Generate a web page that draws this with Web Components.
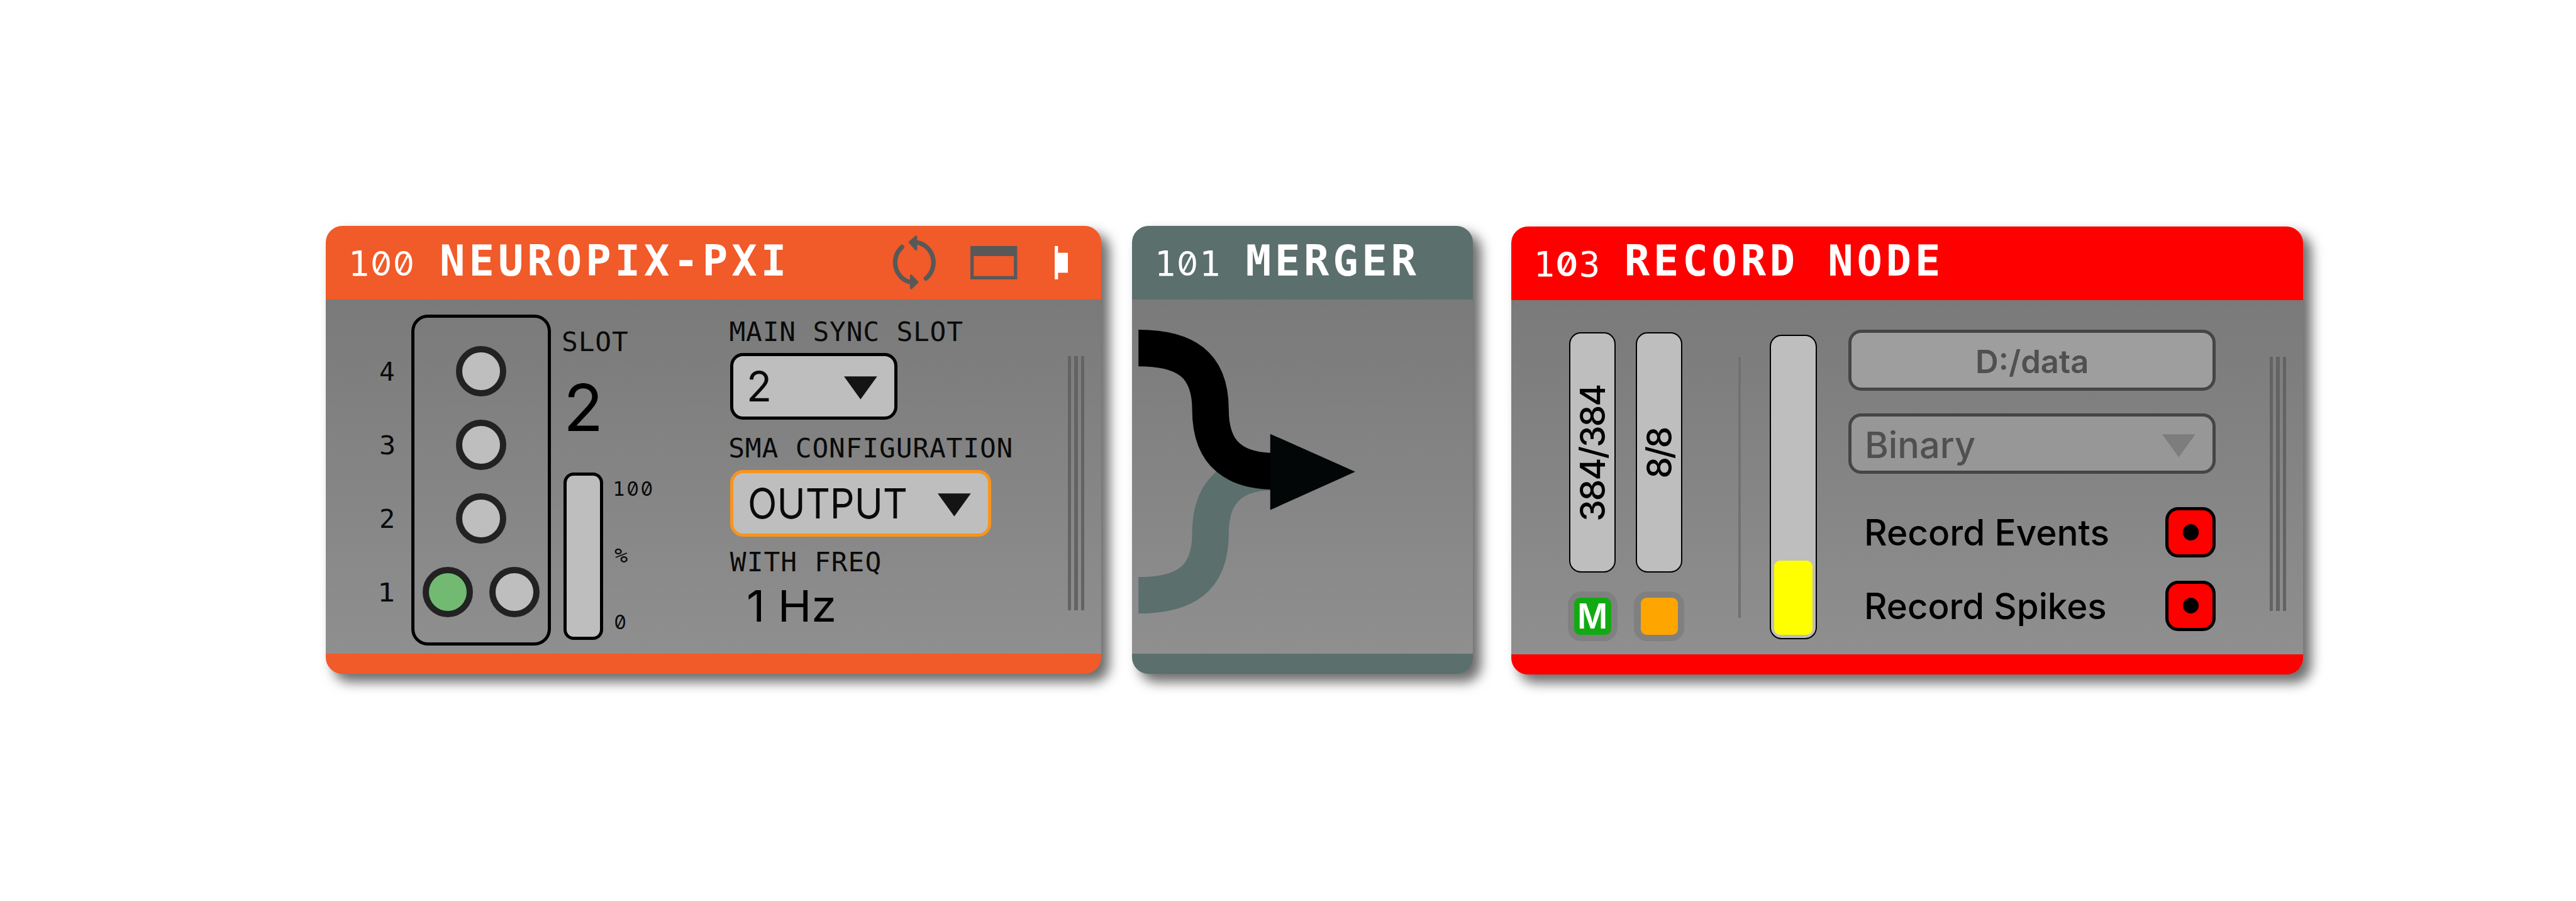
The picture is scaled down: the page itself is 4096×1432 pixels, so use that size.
<!DOCTYPE html>
<html lang="en">
<head>
<meta charset="utf-8">
<title>Signal chain</title>
<style>
  /* 1rem = ten design pixels */
  html { font-size: 8.5015px; background: #fff; }
  body { margin: 0; width: 100vw; height: 100vh; overflow: hidden; }
</style>
</head>
<body>
<signal-chain></signal-chain>
<script>
const MONO = '"DejaVu Sans Mono", monospace';
const SANS = 'Inter, "Liberation Sans", sans-serif';
const ctx = document.createElement('canvas').getContext('2d');
const measure = (weight, family, text) => {
  ctx.font = `${weight} 400px ${family}`;
  return ctx.measureText(text);
};

function define(name, html, setup) {
  customElements.define(name, class extends HTMLElement {
    connectedCallback() {
      if (this.shadowRoot) return;
      this.attachShadow({ mode: 'open' }).innerHTML = html;
      if (setup) setup(this, this.shadowRoot);
    }
  });
}

/* Text whose box is its cap height by its inked width (both in rem).
   The width is reached with letter spacing, or with condensed glyphs if [squeeze]. */
define('fit-label', `<style>
  :host { display: flow-root; flex: none; white-space: pre; }
  div { white-space: pre; transform-origin: 0 0; }
  .z { line-height: 0; font-family: Inter, sans-serif; font-feature-settings: "zero" 1; }
</style><div></div>`, (el, root) => {
  const rem = parseFloat(getComputedStyle(document.documentElement).fontSize);
  const mono = el.hasAttribute('mono');
  const squeeze = el.hasAttribute('squeeze');
  const family = mono ? MONO : SANS;
  const weight = el.getAttribute('weight') || 400;
  const cap = parseFloat(el.getAttribute('cap')) * rem;
  const width = parseFloat(el.getAttribute('w')) * rem;
  const text = el.textContent;
  el.textContent = '';
  const size = cap / (measure(weight, family, 'H').actualBoundingBoxAscent / 400);
  const k = size / 400;
  const m = measure(weight, family, text);
  const ink = (m.actualBoundingBoxLeft + m.actualBoundingBoxRight) * k;
  const ratio = squeeze ? width / ink : 1;
  const gap = text.length > 1 && !squeeze ? (width - ink) / (text.length - 1) : 0;
  const div = root.querySelector('div');
  el.style.width = width + 'px';
  el.style.height = cap + 'px';
  Object.assign(div.style, {
    fontFamily: family, fontWeight: weight, fontSize: size + 'px',
    lineHeight: cap + 'px', letterSpacing: gap + 'px',
    marginTop: (cap - (m.fontBoundingBoxAscent - m.fontBoundingBoxDescent) * k) / 2 + 'px',
    marginLeft: m.actualBoundingBoxLeft * k * ratio + (text.length > 1 || squeeze ? 0 : (width - ink) / 2) + 'px',
    transform: squeeze ? `scaleX(${ratio})` : ''
  });
  if (mono && text.includes('0')) {
    const zw = el.getAttribute('zero') || weight;
    const zs = cap / (measure(zw, 'Inter', 'H').actualBoundingBoxAscent / 400) * 0.96;
    const cell = measure(weight, family, '0').width * k + gap;
    const half = (cell - gap - measure(zw, 'Inter', '0').width * zs / 400) / 2;
    for (const c of text) {
      if (c !== '0') { div.append(c); continue; }
      const s = document.createElement('span');
      s.className = 'z';
      s.textContent = c;
      s.style.cssText = `font-weight:${zw};font-size:${zs}px;margin-left:${half}px;letter-spacing:${half + gap}px`;
      div.append(s);
    }
  } else div.textContent = text;
});

define('signal-node', `<style>
  :host { display: flex; flex-direction: column; flex: none; box-sizing: border-box; height: 83.75rem;
    border-radius: 3.1rem; background: var(--tint); box-shadow: 1.5rem 1.5rem 2.3rem rgba(0,0,0,.58); }
  header { display: flex; align-items: flex-end; height: 13.77rem; box-sizing: border-box;
    padding: 0 6.25rem 4.45rem 4.95rem; color: #fff; }
  .tools { display: flex; align-items: center; margin: 0 0 -4.45rem auto; height: 13.77rem; }
  main { display: flex; align-items: flex-start; height: 66.25rem; color: #0a0a0a;
    background: linear-gradient(#7a7a7a, #8f8f8f); }
</style>
<header><slot name="title"></slot><div class="tools"><slot name="tools"></slot></div></header>
<main><slot></slot></main>`);

define('drag-grip', `<style>
  :host { display: flex; gap: .62rem; height: 47.5rem; flex: none; margin-top: 10.6rem; }
  i { width: .62rem; background: #636363; }
</style><i></i><i></i><i></i>`);

define('probe-port', `<style>
  :host { display: block; box-sizing: border-box; width: 9.4rem; height: 9.4rem; flex: none;
    border: 1.25rem solid #222; border-radius: 50%; background: #bebebe; }
  :host([active]) { background: #72b972; }
</style>`);

define('drop-down', `<style>
  :host { display: flex; align-items: center; justify-content: space-between; box-sizing: border-box;
    height: 12.5rem; padding: 0 3.2rem 0 3rem; border: .62rem solid var(--edge, #000);
    border-radius: 2.4rem; background: var(--fill, #bebebe); }
  svg { width: 6.2rem; height: 4.35rem; margin-top: var(--drop, .6rem); fill: var(--arrow, #141414); }
</style><slot></slot><svg viewBox="0 0 62 43"><path d="M0 0H62L31 43Z"/></svg>`);

define('side-tab', `<style>
  :host { display: flex; align-items: center; justify-content: center; box-sizing: border-box; flex: none;
    width: 8.7rem; height: 45rem; border: .3rem solid #000; border-radius: 2.2rem; background: #bebebe; color: #000; }
  ::slotted(*) { transform: rotate(-90deg); }
</style><slot></slot>`);

define('sync-badge', `<style>
  :host { display: flex; box-sizing: border-box; width: 9.35rem; height: 9.4rem; padding: 1.2rem;
    border-radius: 2.5rem; background: #808080; }
  div { flex: 1; display: flex; align-items: center; justify-content: center; border-radius: 1.1rem;
    background: var(--state); color: #fff; }
</style><div><slot></slot></div>`);

define('record-toggle', `<style>
  :host { display: flex; align-items: center; justify-content: center; box-sizing: border-box;
    width: 9.4rem; height: 9.4rem; border: .62rem solid #000; border-radius: 2.4rem; background: #f00; }
  i { width: 2.95rem; height: 2.95rem; border-radius: 50%; background: #000; }
</style><i></i>`);

define('neuropix-panel', `<style>
  :host { display: flex; width: 100%; align-items: flex-start; }
  .nums { display: flex; flex-direction: column; gap: 10.15rem; margin: 11.65rem 0 0 10.3rem; width: 2.5rem; }
  .ports { display: flex; flex-direction: column; align-items: center; gap: 4.35rem; box-sizing: border-box;
    width: 26.15rem; height: 61.9rem; margin: 2.8rem 0 0 3.2rem; padding-top: 5.3rem;
    border: .62rem solid #000; border-radius: 3.1rem; }
  .pair { display: flex; gap: 3.05rem; }
  .slot { margin: 5.95rem 0 0 2.3rem; width: 31.2rem; }
  .big { margin: 6.05rem 0 0 .75rem; color: #000; }
  .load { display: flex; margin-top: 7.75rem; }
  .bar { box-sizing: border-box; width: 7.5rem; height: 31.25rem; border: .62rem solid #000;
    border-radius: 1.9rem; background: #bebebe; }
  .scale { display: flex; flex-direction: column; gap: 9.75rem; margin: 1.65rem 0 0 2.15rem; }
  .sync { margin-top: 4.05rem; width: 53rem; }
  .sync drop-down { margin-top: 2.2rem; }
  .a { width: 31.3rem; } .b { width: 48.8rem; --edge: #f7941e; }
  .l2 { margin-top: 3.45rem; } .l3 { margin-top: 2.8rem; }
  .freq { margin: 3.55rem 0 0 3.5rem; color: #000; }
  drag-grip { margin-left: auto; margin-right: 3.15rem; }
</style>
<div class="nums"><fit-label mono squeeze cap="3.6" w="2.5">4</fit-label><fit-label mono squeeze cap="3.6" w="2.4">3</fit-label><fit-label mono squeeze cap="3.6" w="2.3">2</fit-label><fit-label mono squeeze cap="3.6" w="2.4">1</fit-label></div>
<div class="ports"><probe-port></probe-port><probe-port></probe-port><probe-port></probe-port>
  <div class="pair"><probe-port active></probe-port><probe-port></probe-port></div></div>
<div class="slot">
  <fit-label mono cap="3.7" w="12.1">SLOT</fit-label>
  <fit-label class="big" squeeze cap="8.9" w="5.9">2</fit-label>
  <div class="load"><div class="bar"></div><div class="scale">
    <fit-label mono cap="2.75" w="6.9">100</fit-label>
    <fit-label mono squeeze cap="2.75" w="2.4">%</fit-label>
    <fit-label mono cap="2.75" w="2">0</fit-label></div></div>
</div>
<div class="sync">
  <fit-label mono cap="3.7" w="43.5">MAIN SYNC SLOT</fit-label>
  <drop-down class="a"><fit-label squeeze cap="5.7" w="3.75">2</fit-label></drop-down>
  <fit-label class="l2" mono cap="3.7" w="52.6">SMA CONFIGURATION</fit-label>
  <drop-down class="b"><fit-label squeeze cap="5.7" w="29.3">OUTPUT</fit-label></drop-down>
  <fit-label class="l3" mono cap="3.7" w="28">WITH FREQ</fit-label>
  <fit-label class="freq" squeeze cap="5.95" w="16">1 Hz</fit-label>
</div>
<drag-grip></drag-grip>`);

define('merger-diagram', `<style>
  :host { display: block; width: 100%; height: 100%; }
  svg { display: block; width: 100%; height: 66.25rem; }
  .in { fill: none; stroke-width: 68.5; }
</style>
<svg viewBox="0 0 637.5 662.5">
  <path class="in" stroke="#5b6f6d" d="M12 553C98 553 146.7 523.6 146.7 437.6C146.7 351.6 195 322 270 322"/>
  <path class="in" stroke="#000" d="M12 90.6C98 90.6 146.7 120 146.7 206C146.7 292 195 321.4 270 321.4"/>
  <path fill="#020606" d="M258.5 251.3L417.5 322L258.5 393.6Z"/>
</svg>`);

define('record-panel', `<style>
  :host { display: flex; width: 100%; align-items: flex-start; }
  .tab { display: flex; flex-direction: column; align-items: center; gap: 3.45rem; }
  .first { margin: 5.95rem 0 0 10.6rem; } .second { margin: 5.95rem 0 0 3.1rem; }
  .rule { width: .5rem; height: 48.8rem; margin: 10.6rem 0 0 10.15rem; background: #717171; }
  .disk { display: flex; flex-direction: column; justify-content: flex-end; box-sizing: border-box; width: 8.75rem;
    height: 56.9rem; margin: 6.5rem 0 0 5.4rem; padding: .6rem; border: .3rem solid #000;
    border-radius: 2.2rem; background: #bebebe; }
  .disk i { height: 13.85rem; background: #ff0; border-radius: 1.1rem; }
  .form { width: 68.75rem; margin: 5.55rem 0 0 5.9rem; color: #000; }
  .path { display: flex; justify-content: center; align-items: center; box-sizing: border-box; height: 11.35rem;
    padding: .4rem 0 0 0; border: .62rem solid #454545; border-radius: 2.4rem; background: #9e9e9e; color: #505050; }
  drop-down { --edge: #454545; --fill: #979797; --arrow: #7d7d7d; --drop: .8rem; height: 11.3rem;
    margin-top: 4.3rem; padding: .4rem 3.2rem 0 3rem; --drop: .4rem; color: #505050; }
  .row { display: flex; align-items: center; justify-content: space-between; padding-left: 3.5rem; margin-top: 6.2rem; }
  .row + .row { margin-top: 4.35rem; }
  drag-grip { margin-left: auto; margin-right: 3.15rem; }
</style>
<div class="tab first"><side-tab><fit-label weight="500" cap="4.75" w="25.2">384/384</fit-label></side-tab>
  <sync-badge style="--state:#12aa12"><fit-label squeeze weight="600" cap="4.7" w="4.9">M</fit-label></sync-badge></div>
<div class="tab second"><side-tab><fit-label weight="500" cap="4.75" w="9.1">8/8</fit-label></side-tab>
  <sync-badge style="--state:#ffa500"></sync-badge></div>
<div class="rule"></div>
<div class="disk"><i></i></div>
<div class="form">
  <div class="path"><fit-label weight="600" squeeze cap="4.35" w="20.5">D:/data</fit-label></div>
  <drop-down><fit-label weight="500" squeeze cap="5" w="20.1">Binary</fit-label></drop-down>
  <div class="row"><fit-label weight="500" squeeze cap="4.95" w="45.1">Record Events</fit-label><record-toggle></record-toggle></div>
  <div class="row"><fit-label weight="500" squeeze cap="4.95" w="44.6">Record Spikes</fit-label><record-toggle></record-toggle></div>
</div>
<drag-grip></drag-grip>`);

define('signal-chain', `<style>
  :host { display: flex; align-items: flex-start; padding: 42.25rem 0 0 60.9rem; }
  .np { width: 145.05rem; --tint: #f15a29; }
  .mg { width: 63.75rem; --tint: #5b6f6d; margin-left: 5.75rem; color: #f4f4f4; }
  .rn { width: 148.15rem; --tint: #f00; margin: .1rem 0 0 7.15rem; }
  .name { margin-left: 5.5rem; }
  svg { display: block; flex: none; }
  .sync { width: 8.2rem; height: 10.2rem; } .win { width: 8.75rem; height: 6.25rem; margin-left: 6.55rem; }
  .flag { width: 2.5rem; height: 6.25rem; margin-left: 6.9rem; }
</style>
<signal-node class="np">
  <fit-label slot="title" mono cap="4.8" w="11.25">100</fit-label>
  <fit-label slot="title" class="name" mono weight="700" cap="5.8" w="63.9">NEUROPIX-PXI</fit-label>
  <svg slot="tools" class="sync" viewBox="1668 441 82 102" fill="none" stroke="#585858" stroke-width="8.5" stroke-linecap="round">
    <path d="M1716 454.5A37 38 0 0 1 1732 521.5M1687 463A37 38 0 0 0 1702 528.5"/>
    <path fill="#585858" stroke-width="4" stroke-linejoin="round" d="M1701.5 454L1713.5 443.5L1713.5 467.5ZM1716 528.5L1704 516.5L1704 540Z"/>
  </svg>
  <svg slot="tools" class="win" viewBox="0 0 87.5 62.5"><path fill="#585858" fill-rule="evenodd" d="M0 0H87.5V62.5H0ZM6.2 18.7V56.3H81.3V18.7Z"/></svg>
  <svg slot="tools" class="flag" viewBox="0 0 25 62.5"><path fill="#fff" d="M0 0H6.3V12.5H25V50H6.3V62.5H0Z"/></svg>
  <neuropix-panel></neuropix-panel>
</signal-node>
<signal-node class="mg">
  <fit-label slot="title" mono cap="4.8" w="11.25">101</fit-label>
  <fit-label slot="title" style="margin-left:5.35rem" mono weight="700" cap="5.8" w="31.7">MERGER</fit-label>
  <merger-diagram></merger-diagram>
</signal-node>
<signal-node class="rn">
  <fit-label slot="title" mono zero="600" cap="4.8" w="11.25">103</fit-label>
  <fit-label slot="title" class="name" mono weight="700" cap="5.8" w="58.2">RECORD NODE</fit-label>
  <record-panel></record-panel>
</signal-node>`);
</script>
</body>
</html>
